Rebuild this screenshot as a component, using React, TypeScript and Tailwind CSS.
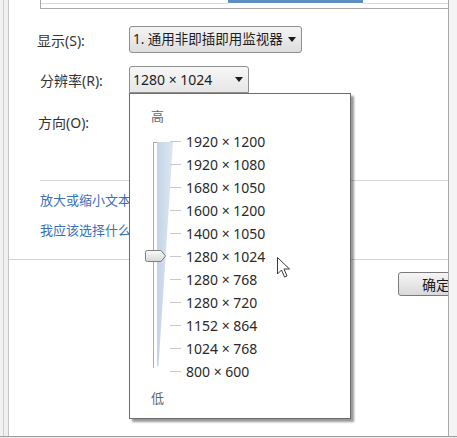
import React from "react";

const items = [
  "1920 × 1200",
  "1920 × 1080",
  "1680 × 1050",
  "1600 × 1200",
  "1400 × 1050",
  "1280 × 1024",
  "1280 × 768",
  "1280 × 720",
  "1152 × 864",
  "1024 × 768",
  "800 × 600",
];

const font = "font-['Noto_Sans','Noto_Sans_CJK_SC',sans-serif]";

function Arrow() {
  return (
    <svg width="8" height="5" viewBox="0 0 8 5" className="shrink-0">
      <path d="M0 0 L8 0 L4 5 Z" fill="#1a1a1a" />
    </svg>
  );
}

function Slider() {
  const ticks = items.map((_, i) => 47 + 23 * i);
  return (
    <svg
      width="60"
      height="290"
      viewBox="0 0 60 290"
      className="absolute left-0 top-0"
    >
      <defs>
        <linearGradient id="wg" x1="0" x2="1" y1="0" y2="0">
          <stop offset="0" stopColor="#c3d4e6" />
          <stop offset="1" stopColor="#dde7f1" />
        </linearGradient>
        <linearGradient id="tg" x1="0" x2="0" y1="0" y2="1">
          <stop offset="0" stopColor="#fbfbfb" />
          <stop offset="1" stopColor="#d6d6d6" />
        </linearGradient>
      </defs>
      <line x1="23.5" y1="48" x2="23.5" y2="274" stroke="#a9a9a9" strokeWidth="1" />
      <line x1="23.5" y1="48.5" x2="27" y2="48.5" stroke="#a9a9a9" strokeWidth="1" />
      <polygon points="27,48 43,48 28.5,272 27,272" fill="url(#wg)" />
      {ticks.map((y) => (
        <line key={y} x1="40" y1={y + 0.5} x2="51" y2={y + 0.5} stroke="#c9c9c9" strokeWidth="1" />
      ))}
      <path
        d="M17.5 156.5 H31 L35.5 162 L31 167.5 H17.5 Q15.5 167.5 15.5 165.5 V158.5 Q15.5 156.5 17.5 156.5 Z"
        fill="url(#tg)"
        stroke="#7e7e7e"
        strokeWidth="1"
      />
    </svg>
  );
}

function Cursor() {
  return (
    <svg
      width="14"
      height="22"
      viewBox="0 0 14 22"
      className="absolute left-[277px] top-[257px]"
    >
      <path
        d="M0.5 0.5 V17 L4.5 13 L7.5 20 L10 19 L7 12 H12.5 Z"
        fill="#ffffff"
        stroke="#3a3a3a"
        strokeWidth="1"
        strokeLinejoin="round"
      />
    </svg>
  );
}

export default function App() {
  return (
    <div className={`relative w-[457px] h-[438px] overflow-hidden bg-white text-[#333] ${font}`}>
      <div className="flex h-[436px]">
        <div className="w-[3px] bg-[#f2f2f2]" />
        <div className="w-[1px] bg-[#cfcfcf]" />
        <div className="w-[4px] bg-[#f0f0f0]" />
        <div className="w-[1px] bg-[#c4c4c4]" />
        {/* main */}
        <div className="w-[439px] flex flex-col overflow-hidden bg-white">
          {/* top box */}
          <div className="ml-[31px] h-[9px] border-l border-b border-[#a8a8a8] flex items-start bg-white">
            <div className="w-[187px] h-[4px] border-b border-[#dadada]" />
            <div className="w-[135px] h-[3px] bg-[#5d8fc4]" />
            <div className="flex-1 h-[4px] border-b border-[#dadada]" />
          </div>
          {/* rows */}
          <div className="pl-[28px] flex flex-col">
            <div className="mt-[17px] h-[27px] flex items-center">
              <div className="w-[92px] text-[14px] pt-[2px]">显示(S):</div>
              <div className="w-[173px] h-[27px] flex items-center justify-between pl-[3px] pr-[5px] border border-[#8f8f8f] rounded-[3px] bg-gradient-to-b from-[#f4f4f4] to-[#dedede] text-[13.5px] text-[#1e1e1e]">
                <span>1. 通用非即插即用监视器</span>
                <Arrow />
              </div>
            </div>
            <div className="mt-[13px] h-[27px] flex items-center">
              <div className="w-[92px] text-[14px] pt-[2px] pl-[3px]">分辨率(R):</div>
              <div className="w-[120px] h-[27px] flex items-center justify-between pl-[3px] pr-[5px] border border-[#8f8f8f] rounded-t-[3px] bg-gradient-to-b from-[#f7f7f7] to-[#e6e6e6] text-[14px] text-[#1e1e1e]">
                <span>1280 × 1024</span>
                <Arrow />
              </div>
            </div>
            <div className="mt-[15px] h-[27px] flex items-center">
              <div className="text-[14px] pt-[2px] pl-[1px]">方向(O):</div>
            </div>
          </div>
          {/* separator */}
          <div className="mt-[45px] ml-[31px] h-[1px] bg-[#d8d8d8]" />
          <div className="pl-[31px] flex flex-col text-[13px] text-[#3b70b6]">
            <div className="h-[19px] mt-[10px] flex items-center">放大或缩小文本和其他项目</div>
            <div className="h-[19px] mt-[11px] flex items-center">我应该选择什么显示器设置?</div>
          </div>
          <div className="mt-[19px] h-[1px] bg-[#d4d4d4]" />
          <div className="flex justify-start pl-[389px] pt-[12px]">
            <div className="shrink-0 w-[76px] h-[24px] flex items-center justify-center border border-[#7a7a7a] rounded-[3px] bg-gradient-to-b from-[#f5f5f5] to-[#d9d9d9] text-[14px] text-[#1a1a1a]">
              确定
            </div>
          </div>
        </div>
        <div className="w-[1px] bg-[#a9a9a9]" />
        <div className="flex-1 bg-[#f4f4f4]" />
      </div>
      <div className="h-[1px] bg-[#9d9d9d]" />
      <div className="h-[1px] bg-[#ededed]" />

      {/* dropdown popup */}
      <div className="absolute left-[129px] top-[93px] w-[222px] h-[326px] bg-white border border-[#6c6c6c] shadow-[3px_3px_2px_rgba(0,0,0,0.4)] flex flex-col">
        <Slider />
        <div className="pl-[21px] pt-[13px] h-[36px] text-[13px] leading-[18px] text-[#666]">高</div>
        <div className="pl-[56px] flex flex-col text-[14px] text-[#2a2a2a]">
          {items.map((t) => (
            <div key={t} className="h-[23px] flex items-center">
              {t}
            </div>
          ))}
        </div>
        <div className="pl-[21px] mt-[6px] h-[18px] text-[13px] leading-[18px] text-[#666]">低</div>
      </div>
      <Cursor />
    </div>
  );
}
